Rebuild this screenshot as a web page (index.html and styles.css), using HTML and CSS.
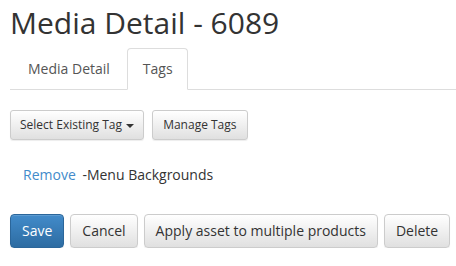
FILE: index.html
```html
<!DOCTYPE html>
<html>
<head>
    <meta charset="UTF-8">
    <title>Media Detail - 6089</title>
    <link rel="stylesheet" href="styles.css">
</head>
<body>
    <h1 class="page-title">Media Detail - 6089</h1>

    <ul class="nav-tabs">
        <li class="tab"><a href="#">Media Detail</a></li>
        <li class="tab active"><a href="#">Tags</a></li>
    </ul>

    <div class="tag-toolbar">
        <button class="btn btn-sm">Select Existing Tag <span class="caret"></span></button>
        <button class="btn btn-sm">Manage Tags</button>
    </div>

    <div class="tag-row">
        <a href="#" class="remove-link">Remove</a>
        <span class="tag-name">-Menu Backgrounds</span>
    </div>

    <div class="form-actions">
        <button class="btn btn-primary">Save</button>
        <button class="btn">Cancel</button>
        <button class="btn">Apply asset to multiple products</button>
        <button class="btn">Delete</button>
        <button class="btn">Close</button>
    </div>
</body>
</html>
```

FILE: styles.css
```css
body {
    font-family: "Open Sans", "Segoe UI", sans-serif;
    font-size: 14px;
    line-height: 1.42857;
    color: #333;
    margin: 0;
    padding: 0 10px;
    background: #fff;
    overflow: hidden;
    width: 446px;
}
.page-title {
    font-size: 30px;
    font-weight: 400;
    line-height: 1.1;
    margin: 6px 0 9px;
    white-space: nowrap;
}
.nav-tabs {
    list-style: none;
    margin: 0 -10px 0 0;
    padding: 0 0 0 2px;
    display: flex;
    border-bottom: 1px solid #ddd;
}
.tab {
    margin-right: 2px;
    margin-bottom: -1px;
}
.tab a {
    display: block;
    padding: 10px 14px 10px 15px;
    line-height: 20px;
    color: #555;
    text-decoration: none;
    border: 1px solid transparent;
    border-radius: 4px 4px 0 0;
}
.tab.active a {
    color: #555;
    background: #fff;
    border-color: #ddd #ddd transparent;
}
.tag-toolbar {
    display: flex;
    gap: 8px;
    margin-top: 20px;
}
.btn {
    font-family: inherit;
    font-size: 14px;
    line-height: 20px;
    padding: 6px 11px;
    color: #333;
    border: 1px solid #ccc;
    border-radius: 4px;
    background: linear-gradient(to bottom, #fff 0%, #e0e0e0 100%);
    box-shadow: inset 0 1px 0 rgba(255,255,255,.15), 0 1px 1px rgba(0,0,0,.075);
    white-space: nowrap;
    cursor: pointer;
    flex-shrink: 0;
}
.btn-sm {
    font-size: 12px;
    line-height: 18px;
    padding: 5px 9px;
    border-radius: 3px;
}
.btn-sm + .btn-sm {
    padding: 5px 10px;
}
.btn-primary {
    color: #fff;
    border-color: #2b669a;
    background: linear-gradient(to bottom, #428bca 0%, #2d6ca2 100%);
}
.caret {
    display: inline-block;
    width: 0;
    height: 0;
    margin-left: 1px;
    vertical-align: middle;
    border-top: 4px solid #333;
    border-left: 4px solid transparent;
    border-right: 4px solid transparent;
}
.tag-row {
    padding: 25px 13px 0;
    line-height: 20px;
}
.remove-link {
    color: #428bca;
    text-decoration: none;
    margin-right: 3px;
}
.form-actions {
    display: flex;
    gap: 6px;
    margin-top: 29px;
}
```
